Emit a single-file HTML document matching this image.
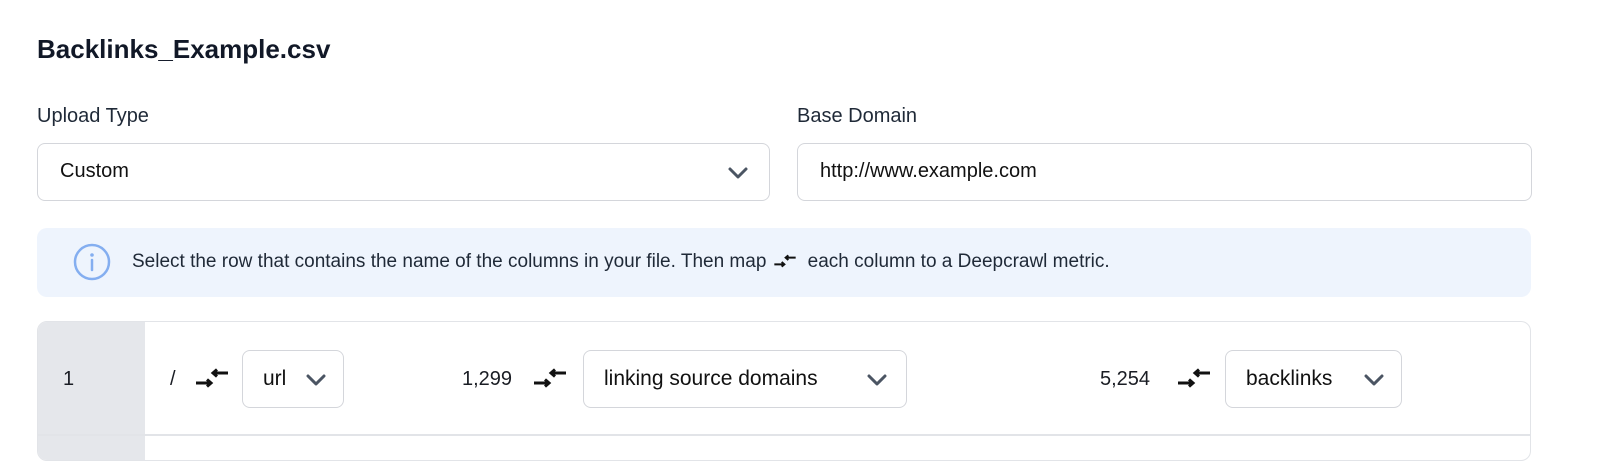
<!DOCTYPE html>
<html><head><style>
body{margin:0;width:1600px;height:447px;background:#fff;font-family:"Liberation Sans",sans-serif;color:#1a1d24;position:relative;overflow:hidden}
.a{position:absolute}
h1{position:absolute;left:37px;top:34px;margin:0;font-size:26px;font-weight:bold;color:#111827}
.lbl{font-size:20px;color:#1f2937}
.inp{position:absolute;border:1.5px solid #d4d6db;border-radius:8px;box-sizing:border-box;font-size:20px;line-height:55px;padding-left:22px;color:#111}
.sel{position:absolute;border:1.5px solid #d4d6db;border-radius:8px;box-sizing:border-box;height:58px;top:350px;font-size:21px;line-height:55px;padding-left:20px;color:#111}
.num{position:absolute;top:368px;font-size:20px}
</style></head><body>
<h1>Backlinks_Example.csv</h1>
<div class="a lbl" style="left:37px;top:105px">Upload Type</div>
<div class="a lbl" style="left:797px;top:105px">Base Domain</div>
<div class="inp" style="left:37px;top:143px;width:733px;height:58px">Custom
<svg class="a" style="right:20px;top:22px" width="22" height="14" viewBox="0 0 22 14"><path d="M3 3l8 8 8-8" fill="none" stroke="#4b5563" stroke-width="3" stroke-linecap="round" stroke-linejoin="round"/></svg></div>
<div class="inp" style="left:797px;top:143px;width:735px;height:58px">http://www.example.com</div>
<div class="a" style="left:37px;top:228px;width:1494px;height:69px;background:#eef4fd;border-radius:10px"></div>
<svg class="a" style="left:73px;top:243px" width="38" height="38" viewBox="0 0 38 38"><circle cx="19" cy="19" r="17" fill="none" stroke="#84aef0" stroke-width="2.5"/><circle cx="19" cy="12" r="1.8" fill="#84aef0"/><path d="M19 17v10" stroke="#84aef0" stroke-width="2.5" stroke-linecap="round"/></svg>
<div class="a" style="left:132px;top:251px;font-size:19px;color:#1f2937;white-space:nowrap">Select the row that contains the name of the columns in your file. Then map <svg width="22" height="16" viewBox="0 0 32 24" style="vertical-align:-2px;margin:0 12px 0 2px"><path d="M0 17h14M11 13.5l4 3.5-4 3.5M32 7h-14M21 3.5l-4 3.5 4 3.5" fill="none" stroke="#111" stroke-width="3"/></svg>each column to a Deepcrawl metric.</div>
<div class="a" style="left:37px;top:321px;width:1494px;height:140px;border:1.5px solid #e2e4e8;border-radius:10px;box-sizing:border-box;overflow:hidden">
<div class="a" style="left:0;top:0;width:107px;height:140px;background:#e5e7eb"></div>
<div class="a" style="left:0;top:112px;width:1494px;height:2px;background:#e2e4e8"></div>
</div>
<div class="num" style="left:63px">1</div>
<div class="num" style="left:170px">/</div>
<div class="num" style="left:462px">1,299</div>
<div class="num" style="left:1100px">5,254</div>
<svg class="a" style="left:196px;top:366px" width="32" height="24" viewBox="0 0 32 24"><path d="M0 17h14M11 13.5l4 3.5-4 3.5M32 7h-14M21 3.5l-4 3.5 4 3.5" fill="none" stroke="#111" stroke-width="3"/></svg>
<svg class="a" style="left:534px;top:366px" width="32" height="24" viewBox="0 0 32 24"><path d="M0 17h14M11 13.5l4 3.5-4 3.5M32 7h-14M21 3.5l-4 3.5 4 3.5" fill="none" stroke="#111" stroke-width="3"/></svg>
<svg class="a" style="left:1178px;top:366px" width="32" height="24" viewBox="0 0 32 24"><path d="M0 17h14M11 13.5l4 3.5-4 3.5M32 7h-14M21 3.5l-4 3.5 4 3.5" fill="none" stroke="#111" stroke-width="3"/></svg>
<div class="sel" style="left:242px;width:102px">url<svg class="a" style="right:16px;top:22px" width="22" height="14" viewBox="0 0 22 14"><path d="M3 3l8 8 8-8" fill="none" stroke="#4b5563" stroke-width="3" stroke-linecap="round" stroke-linejoin="round"/></svg></div>
<div class="sel" style="left:583px;width:324px">linking source domains<svg class="a" style="right:18px;top:22px" width="22" height="14" viewBox="0 0 22 14"><path d="M3 3l8 8 8-8" fill="none" stroke="#4b5563" stroke-width="3" stroke-linecap="round" stroke-linejoin="round"/></svg></div>
<div class="sel" style="left:1225px;width:177px">backlinks<svg class="a" style="right:16px;top:22px" width="22" height="14" viewBox="0 0 22 14"><path d="M3 3l8 8 8-8" fill="none" stroke="#4b5563" stroke-width="3" stroke-linecap="round" stroke-linejoin="round"/></svg></div>
</body></html>
